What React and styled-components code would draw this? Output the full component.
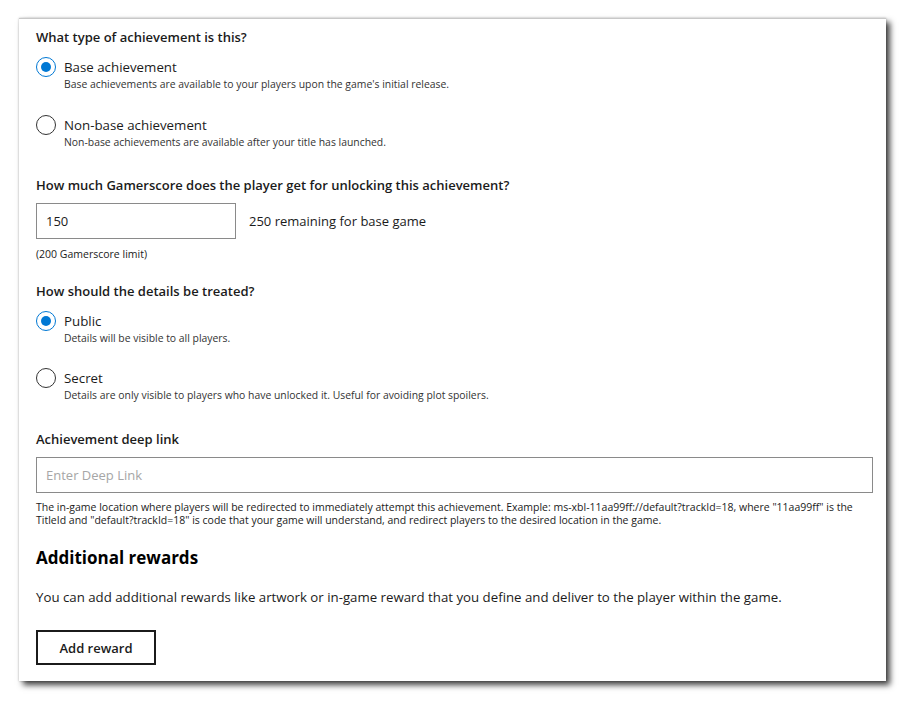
import React from "react";
import styled, { createGlobalStyle } from "styled-components";

const Global = createGlobalStyle`
  html, body { margin: 0; padding: 0; background: #fff; }
  body { font-family: "Open Sans", "Noto Sans", Arial, sans-serif; color: #1b1b1b; }
  * { box-sizing: border-box; }
`;

const Page = styled.div`
  width: 907px;
  height: 703px;
  padding: 18px 21px 0 19px;
  background: #fff;
`;

const Panel = styled.div`
  width: 867px;
  height: 663px;
  background: #fff;
  border-top: 1px solid #c8c8c8;
  box-shadow: 0 0 2px rgba(0,0,0,0.25), 4px 4px 6px rgba(0,0,0,0.75);
  padding: 8px 13px 0 17px;
  display: flex;
  flex-direction: column;
`;

const Question = styled.div`
  font-size: 13px;
  font-weight: 600;
  line-height: 20px;
  margin-top: ${p => p.$mt || 0}px;
`;

const RadioRow = styled.div`
  display: flex;
  align-items: flex-start;
  gap: 8px;
  margin-top: ${p => p.$mt || 0}px;
`;

const Circle = styled.span`
  width: 20px;
  height: 20px;
  border-radius: 50%;
  border: 1px solid ${p => (p.$checked ? "#0078d4" : "#333")};
  display: flex;
  align-items: center;
  justify-content: center;
  flex: none;
  &::after {
    content: "";
    display: ${p => (p.$checked ? "block" : "none")};
    width: 10px;
    height: 10px;
    border-radius: 50%;
    background: #0078d4;
  }
`;

const RadioText = styled.div`
  display: flex;
  flex-direction: column;
`;

const RadioLabel = styled.div`
  font-size: 13.3px;
  font-weight: 500;
  line-height: 20px;
  color: #1b1b1b;
`;

const RadioDesc = styled.div`
  font-size: 10.4px;
  line-height: 14px;
  color: #333;
`;

const InputRow = styled.div`
  display: flex;
  align-items: center;
  gap: 13px;
  margin-top: 8px;
`;

const TextBox = styled.div`
  width: ${p => p.$w};
  height: 36px;
  border: 1px solid #8a8a8a;
  display: flex;
  align-items: center;
  padding-left: 9px;
  font-size: 13px;
  color: ${p => (p.$placeholder ? "#a6a6a6" : "#1b1b1b")};
`;

const Side = styled.span`
  font-size: 13px;
  color: #1b1b1b;
`;

const Small = styled.div`
  font-size: 10.5px;
  line-height: 13px;
  color: #1b1b1b;
  margin-top: ${p => p.$mt || 0}px;
  padding-right: 3px;
`;

const Title = styled.h2`
  margin: 19px 0 0 0;
  font-size: 17px;
  font-weight: 700;
  line-height: 24px;
  color: #000;
`;

const Para = styled.p`
  margin: 18px 0 0 0;
  font-size: 13.25px;
  line-height: 18px;
  color: #1b1b1b;
`;

const Button = styled.button`
  margin-top: 24px;
  width: 120px;
  height: 35px;
  border: 2px solid #1b1b1b;
  background: #fff;
  font-family: inherit;
  font-size: 13px;
  font-weight: 600;
  color: #1b1b1b;
  padding: 0;
  align-self: flex-start;
`;

function Radio({ checked, label, desc, mt }) {
  return (
    <RadioRow $mt={mt}>
      <Circle $checked={checked} />
      <RadioText>
        <RadioLabel>{label}</RadioLabel>
        <RadioDesc>{desc}</RadioDesc>
      </RadioText>
    </RadioRow>
  );
}

export default function App() {
  return (
    <>
      <Global />
      <Page>
        <Panel>
          <Question>What type of achievement is this?</Question>
          <Radio
            mt={10}
            checked
            label="Base achievement"
            desc="Base achievements are available to your players upon the game's initial release."
          />
          <Radio
            mt={24}
            label="Non-base achievement"
            desc="Non-base achievements are available after your title has launched."
          />
          <Question $mt={26}>How much Gamerscore does the player get for unlocking this achievement?</Question>
          <InputRow>
            <TextBox $w="200px">150</TextBox>
            <Side>250 remaining for base game</Side>
          </InputRow>
          <Small $mt={9}>(200 Gamerscore limit)</Small>
          <Question $mt={20}>How should the details be treated?</Question>
          <Radio
            mt={10}
            checked
            label="Public"
            desc="Details will be visible to all players."
          />
          <Radio
            mt={23}
            label="Secret"
            desc="Details are only visible to players who have unlocked it. Useful for avoiding plot spoilers."
          />
          <Question $mt={27}>Achievement deep link</Question>
          <InputRow>
            <TextBox $w="837px" $placeholder>Enter Deep Link</TextBox>
          </InputRow>
          <Small $mt={8}>
            The in-game location where players will be redirected to immediately attempt this achievement. Example: ms-xbl-11aa99ff://default?trackId=18, where "11aa99ff" is the TitleId and "default?trackId=18" is code that your game will understand, and redirect players to the desired location in the game.
          </Small>
          <Title>Additional rewards</Title>
          <Para>You can add additional rewards like artwork or in-game reward that you define and deliver to the player within the game.</Para>
          <Button>Add reward</Button>
        </Panel>
      </Page>
    </>
  );
}
